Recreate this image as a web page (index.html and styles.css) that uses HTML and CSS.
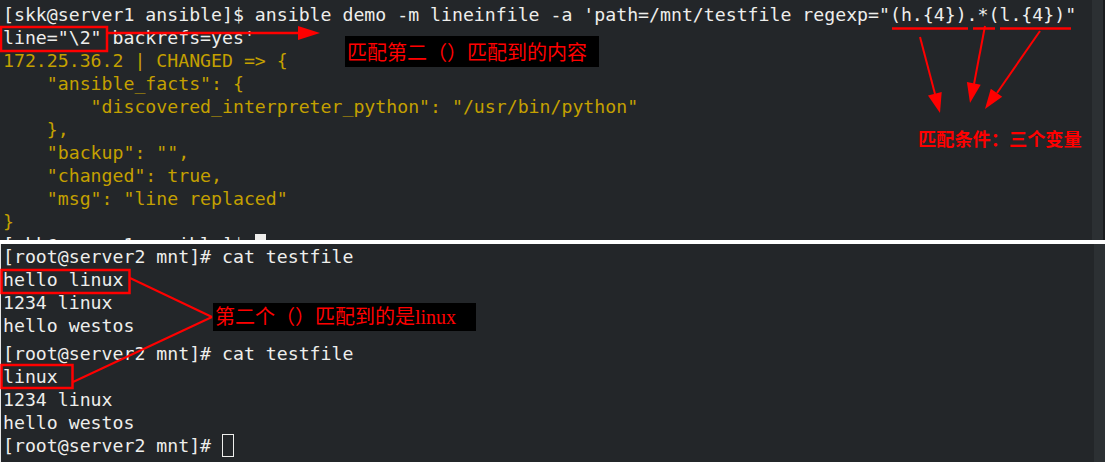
FILE: index.html
```html
<!DOCTYPE html>
<html lang="zh">
<head>
<meta charset="utf-8">
<title>ansible lineinfile backrefs</title>
<link rel="stylesheet" href="styles.css">
</head>
<body>
<div class="page">
  <section class="term term-top">
    <div class="main">
      <div class="tabline"><span class="tab"></span></div>
      <pre class="text">[skk@server1 ansible]$ ansible demo -m lineinfile -a 'path=/mnt/testfile regexp="(h.{4}).*(l.{4})"
line="\2" backrefs=yes'
<span class="y">172.25.36.2 | CHANGED =&gt; {
    "ansible_facts": {
        "discovered_interpreter_python": "/usr/bin/python"
    },
    "backup": "",
    "changed": true,
    "msg": "line replaced"
}</span>
[skk@server1 ansible]$ <span class="cur-fill"> </span></pre>
    </div>
    <div class="scroll"></div>
  </section>

  <section class="term term-bottom">
    <div class="main">
      <pre class="text">[root@server2 mnt]# cat testfile
hello linux
1234 linux
hello westos</pre>
      <pre class="text block2">[root@server2 mnt]# cat testfile
linux
1234 linux
hello westos
[root@server2 mnt]# <span class="cur-hollow"> </span></pre>
    </div>
    <div class="scroll"></div>
  </section>

  <svg class="marks" width="1105" height="462" viewBox="0 0 1105 462">
    <g fill="none" stroke="#f00" stroke-width="2.5">
      <rect x="1" y="27" width="106" height="24"/>
      <rect x="1.5" y="270" width="128" height="23"/>
      <rect x="1.5" y="365" width="71" height="23"/>
    </g>
    <g stroke="#f00" stroke-width="2.5" stroke-linecap="butt">
      <line x1="108" y1="33" x2="300" y2="33"/>
      <line x1="892" y1="28.5" x2="968" y2="28.5"/>
      <line x1="973" y1="28.5" x2="995" y2="28.5"/>
      <line x1="1000" y1="28.5" x2="1071" y2="28.5"/>
    </g>
    <g stroke="#f00" stroke-width="2">
      <line x1="920" y1="37" x2="935" y2="94"/>
      <line x1="985" y1="26" x2="974" y2="84"/>
      <line x1="1040" y1="31" x2="997" y2="93"/>
      <line x1="130" y1="278" x2="212" y2="317"/>
      <line x1="212" y1="317" x2="73" y2="382"/>
    </g>
    <g fill="#f00">
      <polygon points="298,26 320,33 298,40"/>
      <polygon points="928,95.5 941.7,91.9 940,113"/>
      <polygon points="966.9,82.1 980.7,84.7 970,103"/>
      <polygon points="990.8,88.7 1002.2,96.7 985,109"/>
    </g>
  </svg>

  <div class="label label-black label-1">匹配第二（）匹配到的内容</div>
  <div class="label label-2">匹配条件：三个变量</div>
  <div class="label label-black label-3">第二个（）匹配到的是linux</div>
</div>
</body>
</html>
```

FILE: styles.css
```css
* { box-sizing: border-box; }

html, body {
  margin: 0;
  padding: 0;
  background: #ffffff;
}

.page {
  position: relative;
  width: 1105px;
  height: 462px;
  overflow: hidden;
  background: #ffffff;
}

.term {
  display: flex;
  flex-direction: row;
  background: #232629;
  overflow: hidden;
}

.term-top {
  height: 240px;
  border-right: 2px solid #1a1c1e;
}

.term-bottom {
  height: 218px;
  margin-top: 4px;
  border-left: 1px solid #e6e6e6;
}

.main {
  flex: 1;
  display: flex;
  flex-direction: column;
  min-width: 0;
}

.scroll {
  width: 11px;
  background: #2c3033;
}

.tabline {
  height: 3px;
  display: flex;
}

.tab {
  margin-left: 263px;
  width: 234px;
  background: #2a5f9e;
}

.text {
  margin: 0;
  padding: 2px 0 0 3px;
  font-family: "DejaVu Sans Mono", "Liberation Mono", monospace;
  font-size: 18.2px;
  line-height: 23px;
  color: #eeeeec;
  white-space: pre;
}

.term-top .text {
  padding-top: 2.5px;
}

.term-bottom .text {
  padding: 1px 0 0 2px;
}

.term-bottom .block2 {
  padding-top: 0;
  margin-top: 5px;
}

.y { color: #c4a000; }

.cur-fill {
  background: #eeeeec;
}

.cur-hollow {
  display: inline-block;
  width: 12px;
  height: 23px;
  vertical-align: top;
  border: 1.5px solid #eeeeec;
}

.marks {
  position: absolute;
  left: 0;
  top: 0;
  pointer-events: none;
}

.label {
  position: absolute;
  color: #ff0000;
  white-space: nowrap;
}

.label-black {
  background: #000000;
}

.label-1 {
  left: 345px;
  top: 36px;
  width: 254px;
  height: 31px;
  padding-left: 2px;
  font-family: "Noto Sans CJK SC", sans-serif;
  font-size: 20px;
  line-height: 31px;
}

.label-2 {
  left: 918px;
  top: 126px;
  font-family: "Noto Sans CJK SC", sans-serif;
  font-weight: 700;
  font-size: 18.2px;
  line-height: 24px;
}

.label-3 {
  left: 213px;
  top: 303px;
  width: 263px;
  height: 28px;
  padding-left: 2px;
  font-family: "Liberation Serif", "Noto Sans CJK SC", serif;
  font-size: 20px;
  line-height: 28px;
}
```
